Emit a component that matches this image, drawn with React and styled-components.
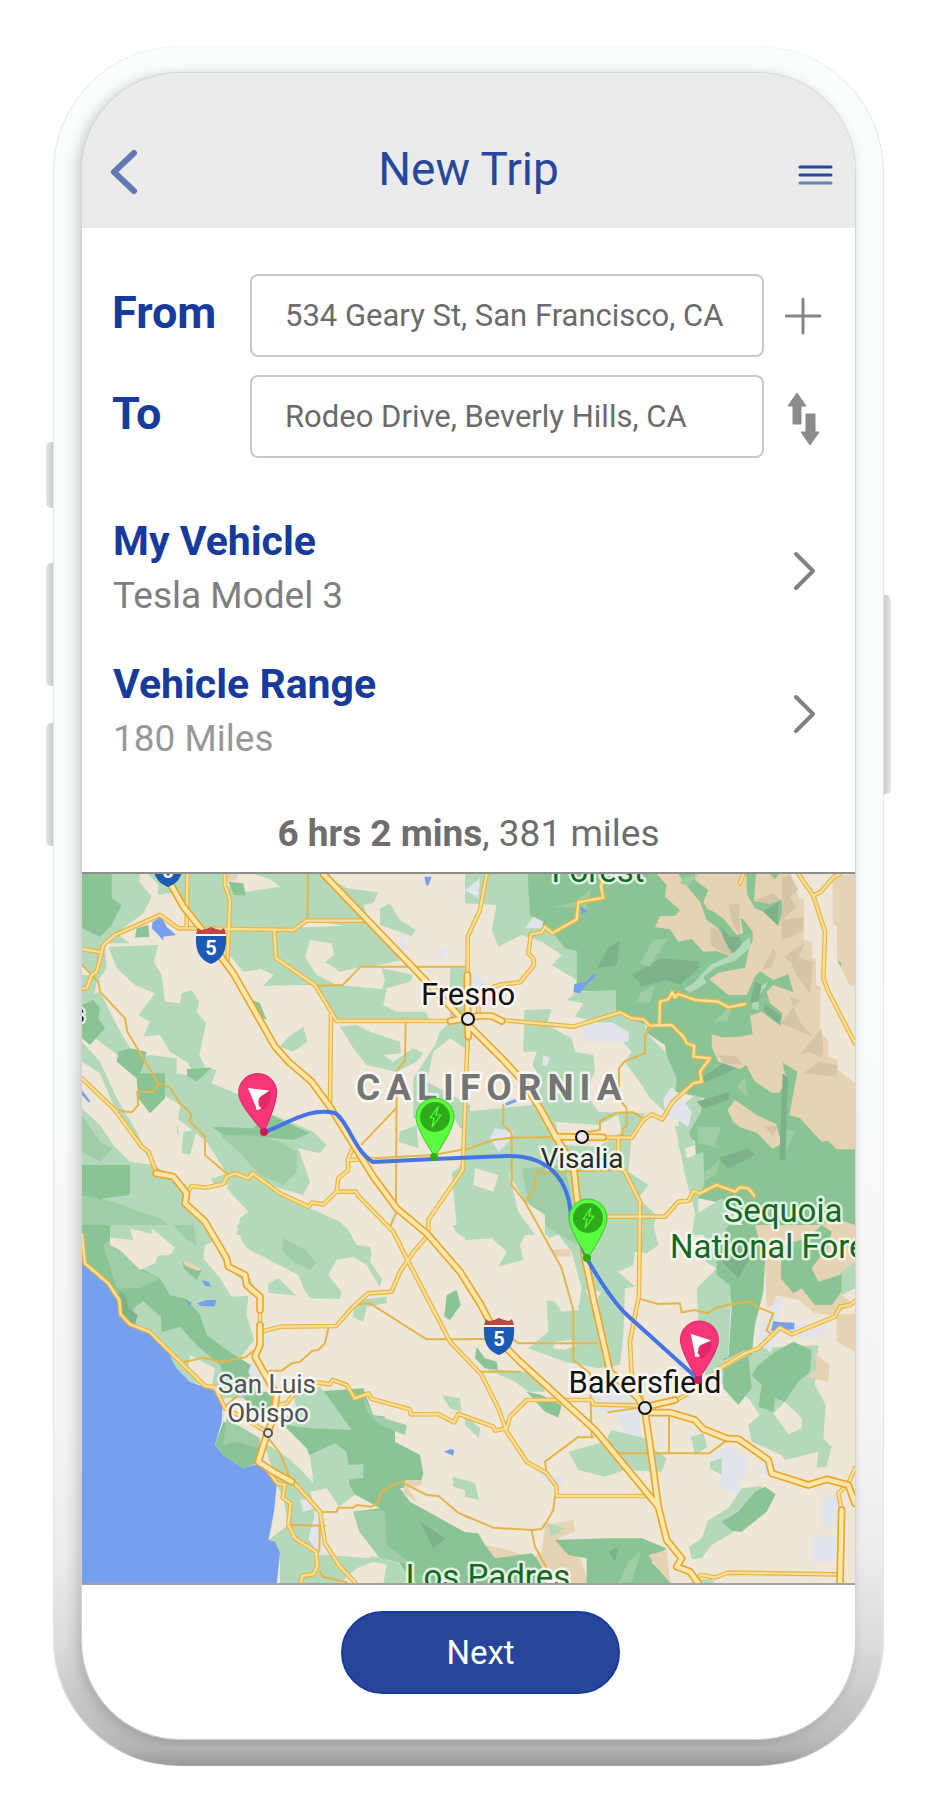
import React, { useState } from "react"
import styled, { createGlobalStyle } from "styled-components"

const GlobalStyle = createGlobalStyle`
  * {
    box-sizing: border-box;
  }

  body {
    margin: 0;
    background: #ffffff;
    font-family: Roboto, "Liberation Sans", sans-serif;
  }

  button, input {
    font-family: inherit;
  }
`

const Page = styled.div`
display: flex;
justify-content: center;
padding: 46px 54px 47px 53px;
`

const Phone = styled.div`
position: relative;
flex: 1;
min-width: 0;
max-width: 831px;
`

const SideButton = styled.span`
position: absolute;
top: ${(props) => props.$top}px;
${(props) => props.$side}: -7px;
width: 8px;
height: ${(props) => props.$height}px;
border-radius: ${(props) => (props.$side === "left" ? "5px 0 0 5px" : "0 5px 5px 0")};
background: linear-gradient(to ${(props) => props.$side}, #c6c6c6, #e6e7e7);
`

const Frame = styled.div`
position: relative;
overflow: hidden;
padding: 27px 29px;
border-radius: 126px;
background: linear-gradient(#fafdfe 0%, #fafdfe 50%, #f4f5f5 80%, #ebecec 88%, #dadbdb 93%, #bcbebd 98%, #b3b5b4 99%, #979998 100%);
box-shadow: inset 1px 0 1px #e4e6e6, inset -1px 0 1px #e4e6e6;
`

const Screen = styled.main`
overflow: hidden;
border-radius: 98px;
background: #ffffff;
box-shadow: 0 0 1px 1px #d3d3d3, 0 0 12px rgba(0, 0, 0, 0.09), -7px 3px 14px rgba(0, 0, 0, 0.13);
`

const Header = styled.header`
display: grid;
grid-template-columns: 1fr auto 1fr;
align-items: center;
height: 155px;
padding: 36px 20px 0;
background: #ebebeb;

    h1 {
        margin: 0;
        color: #27479c;
        font-size: 46px;
        font-weight: 400;
    }
`

const IconButton = styled.button`
display: flex;
justify-self: ${(props) => props.$align || "center"};
padding: 0;
border: 0;
background: none;
cursor: pointer;
`

const TripForm = styled.form`
display: grid;
grid-template-columns: 138px 1fr 79px;
row-gap: 18px;
align-items: center;
padding: 46px 12px 0 30px;
`

const FieldLabel = styled.label`
padding-bottom: 6px;
color: #173b9d;
font-size: 45px;
font-weight: 700;
line-height: 52px;
`

const Field = styled.input`
width: 100%;
min-width: 0;
height: 83px;
padding: 0 33px;
border: 2px solid #c9c9c9;
border-radius: 8px;
background: #ffffff;
color: #6b6b6b;
font-size: 31px;
`

const Options = styled.div`
display: flex;
flex-direction: column;
gap: 33px;
padding: 55px 38px 0 31px;
`

const Option = styled.a`
display: flex;
align-items: center;
justify-content: space-between;
text-decoration: none;

    strong {
        display: block;
        color: #173b9d;
        font-size: 41px;
        line-height: 56px;
    }

    span {
        display: block;
        color: ${(props) => (props.$faded ? "#989898" : "#7e7e7e")};
        font-size: 37px;
        line-height: 54px;
    }
`

const Summary = styled.p`
margin: 0;
padding: 44px 0 14px;
color: #706d6e;
font-size: 37px;
line-height: 48px;
text-align: center;
`

const MapFrame = styled.div`
border-top: 2px solid #8e8e8e;
border-bottom: 2px solid #a3a1a1;

    svg {
        display: block;
        width: 100%;
    }
`

const Footer = styled.footer`
display: flex;
justify-content: center;
height: 154px;
padding: 26px 0 0 24px;
`

const NextButton = styled.button`
width: 279px;
height: 83px;
border: 2px solid #173b9d;
border-radius: 42px;
background: #27459a;
color: #ffffff;
font-size: 33px;
cursor: pointer;
`

const MapLabel = styled.text`
fill: ${(props) => props.$color || "#111111"};
font-size: ${(props) => props.$size}px;
font-weight: ${(props) => props.$weight || 400};
letter-spacing: ${(props) => (props.$wide ? "6px" : "normal")};
stroke: rgba(255, 255, 255, 0.75);
stroke-width: 5px;
stroke-linejoin: round;
paint-order: stroke;
text-anchor: ${(props) => props.$anchor || "middle"};
`

// the terrain is drawn in tiles, each with its own origin
const TILES = { nw: [0, 0], ne: [1155, 0], sierra: [1680, 15], sw: [0, 1080], se: [1155, 1080] }

const COLORS = {
  land: "#eee7d8",
  light: "#b4d9ba",
  mid: "#9fcea6",
  dark: "#8ac495",
  shade: "#7db189",
  sand: "#e5d3b4",
  sandShade: "#d5c4a5",
  urban: "#e1e4ea",
  water: "#779fef",
}

const TERRAIN = [
  ["nw", "light", "6,27 180,27 178,50 215,95 190,145 110,205 150,235 75,235 80,310 55,345 6,300"],
  ["nw", "dark", "6,27 95,27 95,100 125,120 95,180 60,215 6,190"],
  ["nw", "dark", "170,190 205,180 208,215 165,218"],
  ["nw", "light", "205,27 435,27 430,60 500,80 600,65 570,42 520,27 730,27 800,70 895,82 880,115 850,120 870,170 840,190 680,165 640,190 440,195 360,180 290,80 235,90 235,60"],
  ["nw", "dark", "445,50 490,55 497,92 462,90"],
  ["nw", "sand", "440,27 475,27 470,45 445,50"],
  ["nw", "light", "450,195 860,180 900,210 965,285 900,300 850,305 780,320 735,290 762,270 755,235 690,225 675,275 710,330 770,360 905,372 915,345 905,310 1000,330 990,350 920,370 910,420 950,440 1035,440 1050,465 770,465 700,360 640,360 550,363 580,330 545,313 490,320 440,260"],
  ["nw", "light", "900,130 930,115 960,165 1008,195 995,213 900,180"],
  ["nw", "urban", "965,205 990,290 950,245"],
  ["nw", "urban", "1110,235 1085,300 1072,265"],
  ["nw", "urban", "1135,95 1170,65 1170,105"],
  ["nw", "urban", "1065,492 1100,495 1085,522"],
  ["nw", "light", "1110,310 1170,310 1170,560 1110,520 1060,560 1040,650 1170,720 1170,780 1140,790 1110,740 1000,760 1000,640 1065,540 1080,500 1110,470"],
  ["nw", "light", "85,245 235,240 222,290 245,330 255,410 300,415 305,385 335,375 358,410 350,440 378,475 358,570 375,605 410,615 395,655 480,690 560,740 700,800 740,840 720,865 655,850 690,950 670,990 600,970 500,930 440,960 400,960 380,890 320,860 290,800 300,720 250,690 200,700 150,600 100,560 20,500 6,480 6,400 60,380 110,480 150,550 190,575 210,570 290,580 290,625 345,635 325,595 270,560 240,510 190,515 210,470 175,450 225,385 165,360 110,310"],
  ["nw", "light", "6,330 55,330 40,400 6,400"],
  ["nw", "dark", "6,420 40,405 60,430 55,460 75,490 30,540 6,520"],
  ["nw", "light", "6,530 60,590 110,700 170,800 220,900 320,960 310,1020 410,1110 6,1110"],
  ["nw", "land", "6,590 60,625 100,720 180,840 220,900 150,890 100,840 60,780 6,730"],
  ["nw", "dark", "115,560 150,550 200,560 190,600 180,625 255,625 255,700 210,745 175,700 170,640 110,590"],
  ["nw", "mid", "6,750 60,830 100,850 60,890 6,860"],
  ["nw", "dark", "6,900 150,900 150,990 70,1000 6,1060"],
  ["nw", "mid", "6,990 100,1010 180,1040 240,1060 300,1110 6,1110"],
  ["nw", "dark", "320,612 395,608 350,650 322,632"],
  ["nw", "dark", "505,400 540,415 560,465 530,450"],
  ["nw", "light", "625,515 670,485 682,530 640,560 600,545"],
  ["nw", "light", "780,485 830,480 870,500 960,530 962,565 910,570 940,590 1000,550 1030,565 1010,590 950,620 860,600 820,550"],
  ["nw", "dark", "395,785 520,790 560,745 690,805 640,825 530,815 430,810"],
  ["nw", "mid", "420,810 530,812 600,830 650,860 650,920 610,960 540,930 475,860"],
  ["nw", "land", "290,760 330,790 380,830 440,925 370,950 310,900"],
  ["nw", "light", "310,800 350,795 330,870 305,865"],
  ["nw", "light", "450,950 520,925 600,985 690,1030 780,1070 815,1110 470,1110 480,1060 505,1040 440,970"],
  ["nw", "light", "960,800 1010,780 1015,850 955,830"],
  ["nw", "light", "1115,925 1170,880 1170,1110 1130,1080"],
  ["nw", "urban", "925,1040 970,1020 935,1090"],
  ["nw", "water", "218,170 245,155 260,185 288,210 250,215 250,228 235,210 215,190"],
  ["nw", "water", "1033,35 1055,35 1045,62 1038,60"],
  ["nw", "water", "6,675 32,710 25,712 6,690"],

  ["ne", "light", "0,27 190,27 200,150 250,185 270,210 300,245 335,258 335,345 260,300 290,270 230,230 170,210 100,245 80,195 95,120 0,115"],
  ["ne", "dark", "188,27 1000,27 1040,240 1060,500 1110,600 1170,650 1170,1110 850,1110 800,1020 700,1000 690,830 640,790 720,700 630,680 610,610 600,540 540,500 550,480 452,460 452,378 335,378 335,258 300,250 265,205 195,150"],
  ["ne", "light", "335,380 452,375 452,435 540,480 550,510 600,560 635,640 630,720 600,740 555,700 530,660 480,590 500,560 430,480 330,455 355,415 305,405"],
  ["ne", "light", "178,435 260,432 245,480 320,520 330,560 385,570 390,620 360,680 400,740 540,745 500,810 490,920 550,960 520,1000 575,1050 560,1110 0,1110 0,740 200,720 215,620 175,560"],
  ["ne", "mid", "170,910 300,900 320,1000 330,1110 230,1080 190,1010"],
  ["ne", "land", "30,910 100,930 85,980 25,960"],
  ["ne", "land", "130,920 180,1010 240,1050 240,1110 210,1110 160,1040"],
  ["ne", "land", "270,770 400,780 460,750 470,800 400,845 290,840"],
  ["ne", "land", "150,560 215,560 190,640 130,700 80,640 90,560"],
  ["ne", "urban", "20,320 60,350 80,420 20,430"],
  ["ne", "urban", "205,155 235,170 230,190 180,190"],
  ["ne", "urban", "355,475 440,472 492,500 490,530 355,530"],
  ["ne", "urban", "90,790 150,800 130,830 100,860 75,820"],
  ["ne", "urban", "0,75 45,40 40,100"],
  ["ne", "light", "640,730 690,690 712,700 708,740 680,790 660,830 640,850"],
  ["ne", "light", "630,780 670,800 690,840 660,850 665,880 715,860 718,960 700,1000 700,1080 660,930 650,880"],
  ["ne", "urban", "620,665 650,700 680,740 670,785 600,745 595,700"],
  ["ne", "shade", "500,330 590,280 705,290 640,350 600,340 530,355"],
  ["ne", "shade", "430,250 465,225 455,300 395,310"],
  ["ne", "shade", "760,880 850,850 870,870 790,910"],
  ["ne", "mid", "330,110 380,70 365,130 270,125"],
  ["ne", "mid", "560,250 605,220 580,270 540,265"],
  ["ne", "mid", "530,390 570,360 555,410 510,415"],
  ["ne", "water", "328,357 365,350 372,340 392,322 388,340 370,352 345,385 325,382"],
  ["ne", "water", "345,122 370,140 350,146"],
  ["ne", "water", "120,715 150,702 155,710 125,722"],
  ["ne", "urban", "235,570 255,580 245,605 232,600"],
  ["ne", "light", "690,1050 770,1000 800,1020 820,1110 680,1110"],
  ["ne", "sand", "870,1080 930,1110 870,1110"],
  ["ne", "sand", "1050,1090 1110,1060 1170,1080 1170,1110 1050,1110"],

  ["sierra", "sand", "50,12 80,45 75,80 120,120 105,138 60,138 45,172 90,178 115,215 155,207 190,245 230,243 280,262 335,200 315,293 235,308 208,328 265,375 320,375 345,320 360,303 400,330 445,312 460,367 400,345 380,365 390,400 427,430 422,468 365,425 330,437 338,492 300,500 245,502 215,492 215,530 235,575 300,598 318,585 345,635 395,668 417,668 440,635 428,578 472,605 448,735 480,745 545,815 565,812 590,838 645,838 645,12"],
  ["sierra", "dark", "115,12 165,12 165,25 205,60 190,100 215,120 255,150 290,195 310,190 300,135 338,185 338,215 320,240 280,262 250,225 235,175 200,150 180,95 150,60"],
  ["sierra", "sand", "165,12 165,30 205,60 192,92 200,115 240,135 260,155 292,193 310,190 298,145 320,150 335,100 318,70 310,12"],
  ["sierra", "dark", "318,12 348,12 342,92 390,102 425,88 428,125 415,168 380,130 345,115 322,75"],
  ["sierra", "dark", "390,12 418,12 405,28"],
  ["sierra", "dark", "628,142 645,140 645,162 632,160"],
  ["sierra", "sand", "262,720 285,690 350,735 408,762 425,822 397,836 350,788 300,772 280,755"],
  ["sierra", "light", "132,356 160,340 210,285 260,262 330,200 332,232 285,272 230,290 190,322 200,338 150,368"],
  ["sierra", "light", "335,415 345,360 385,335 375,355 358,372 355,420"],
  ["sierra", "mid", "0,280 40,210 85,205 45,260 30,290"],
  ["sierra", "mid", "0,370 45,345 30,395 0,400"],
  ["sierra", "mid", "220,455 280,405 260,455"],
  ["sierra", "mid", "130,25 175,12 145,48 120,40"],
  ["sierra", "mid", "290,650 315,620 322,680"],
  ["sierra", "mid", "170,770 245,770 225,825 245,835 175,820"],
  ["sierra", "mid", "440,780 465,785 438,840"],
  ["sierra", "mid", "195,905 240,870 230,910 190,935"],
  ["sierra", "shade", "0,325 80,265 180,290 120,345 80,330 0,350"],
  ["sierra", "shade", "175,630 250,580 290,595 200,635"],
  ["sierra", "shade", "170,695 270,665 265,690 190,715"],
  ["sierra", "shade", "428,610 445,625 440,720 436,872 418,868"],
  ["sierra", "shade", "240,165 270,200 300,200 305,225 280,250 255,220"],
  ["sierra", "shade", "345,335 365,345 355,395 330,400"],
  ["sierra", "shade", "372,400 425,440 415,460 375,425"],
  ["sierra", "shade", "370,125 415,95 412,165"],
  ["sierra", "land", "450,12 645,12 645,640 595,600 590,570 565,560 565,510 540,490 542,350 528,345 528,268 517,265 515,213 492,210 492,90 477,85"],
  ["sierra", "sand", "578,20 645,12 645,350 628,345 592,270 590,170 578,160"],
  ["sierra", "dark", "592,272 603,278 603,292"],
  ["sierra", "sandShade", "425,25 450,12 475,60 450,80 470,110 425,150 428,90"],
  ["sierra", "sandShade", "425,150 490,140 490,180 455,200 425,210"],
  ["sierra", "sandShade", "430,260 492,220 475,265 520,275 510,370 465,310 455,280"],
  ["sierra", "sandShade", "365,300 400,235 410,250 395,290"],
  ["sierra", "sandShade", "480,555 545,475 550,535 545,565 510,545"],
  ["sierra", "sandShade", "490,610 535,575 592,585 590,620"],
  ["sierra", "sandShade", "420,460 480,390 450,380 475,450 520,500"],
  ["sierra", "sandShade", "210,170 240,180 278,262 215,230"],
  ["sierra", "sandShade", "265,105 298,100 300,190 280,170"],
  ["sierra", "sandShade", "235,555 290,560 310,585 250,580"],
  ["sierra", "sandShade", "370,765 412,770 400,800"],
  ["sierra", "sandShade", "345,90 400,70 420,88 390,102"],

  ["sw", "light", "6,0 380,0 440,120 510,160 530,200 505,212 500,270 522,345 480,400 530,440 560,530 540,640 430,590 425,520 300,440 6,130"],
  ["sw", "dark", "6,0 90,0 90,50 125,75 180,130 240,160 270,210 320,222 360,270 380,330 440,375 520,425 520,470 500,490 440,470 420,420 350,360 300,305 245,322 243,275 190,228 160,250 165,300 60,160 6,110"],
  ["sw", "mid", "90,45 180,135 240,160 180,190 110,190 70,60"],
  ["sw", "mid", "280,0 340,0 350,60 320,45"],
  ["sw", "dark", "310,110 365,135 350,165 310,130"],
  ["sw", "sand", "310,105 365,130 355,138 315,122"],
  ["sw", "land", "90,38 160,45 150,10 215,28 215,10 285,68 270,90 235,92 225,115 180,135 120,75 90,60"],
  ["sw", "land", "375,60 400,50 440,130 510,180 510,212 455,215 420,160 370,100"],
  ["sw", "land", "330,390 405,430 395,485 370,480 325,425"],
  ["sw", "land", "430,520 500,520 560,560 560,630 520,650 460,610 430,590"],
  ["sw", "dark", "480,500 560,500 585,520 570,570 510,545"],
  ["sw", "dark", "600,590 640,560 700,500 850,490 880,570 915,575 910,600 945,610 945,650 1020,690 1030,745 1020,780 960,790 990,830 1170,930 1170,1075 1000,1075 920,960 840,925 820,860 900,850 810,800 805,765 700,720 680,670"],
  ["sw", "light", "640,500 720,485 740,510 815,615 700,610 610,600 650,560"],
  ["sw", "mid", "850,510 880,570 980,600 975,630 900,600 860,560"],
  ["sw", "mid", "820,860 915,855 920,960 1000,1020 900,1000 840,925"],
  ["sw", "light", "690,690 765,655 800,680 805,720 850,718 850,758 800,765 825,810 770,850 700,780"],
  ["sw", "light", "550,650 640,710 770,850 700,860 730,960 860,990 950,1010 1010,1075 600,1075 600,985 560,940 590,860 590,770"],
  ["sw", "land", "570,640 640,640 690,710 700,760 640,715"],
  ["sw", "land", "590,780 610,820 625,900 565,945 585,870"],
  ["sw", "land", "690,800 740,790 780,850 830,910 880,975 870,1000 750,990 715,870"],
  ["sw", "land", "830,1030 880,1010 920,1020 910,1075 780,1075"],
  ["sw", "urban", "660,825 690,820 705,850 670,860"],
  ["sw", "urban", "705,870 735,880 730,960 750,990 715,990 685,940"],
  ["sw", "urban", "520,400 560,480 530,500 505,440"],
  ["sw", "urban", "555,320 575,335 570,360 555,355"],
  ["sw", "water", "6,60 20,120 85,180 115,225 120,270 150,300 205,320 270,390 290,430 330,470 370,485 410,500 427,545 425,590 405,660 430,690 490,730 540,715 590,780 582,860 565,945 585,950 600,985 590,1075 6,1075"],
  ["sw", "light", "270,395 310,425 370,480 330,470 290,430"],
  ["sw", "dark", "430,590 470,600 540,650 530,715 490,732 430,690 405,660"],
  ["sw", "mid", "440,580 540,640 535,670 470,650 430,660"],
  ["sw", "shade", "115,195 135,210 145,250 172,270 165,300 125,275"],
  ["sw", "light", "470,0 790,0 805,15 830,60 870,65 875,90 870,110 905,160 900,188 860,120 820,95 770,105 745,150 785,200 780,222 690,220 670,190 655,150 500,70 485,45"],
  ["sw", "mid", "610,40 670,70 710,115 690,135 640,110 605,75"],
  ["sw", "light", "565,175 595,160 650,212 565,203"],
  ["sw", "dark", "1100,210 1130,195 1142,240 1110,285 1093,275"],
  ["sw", "light", "830,225 920,215 920,235 860,245 850,290 818,275"],
  ["sw", "light", "1085,510 1140,520 1145,560 1110,550"],
  ["sw", "light", "1118,0 1170,0 1170,45 1130,25"],
  ["sw", "light", "1118,755 1170,770 1170,800 1120,785"],
  ["sw", "sand", "975,765 1025,765 1025,780 985,790 1015,835 970,805"],
  ["sw", "shade", "1020,890 1095,940 1060,970"],
  ["sw", "water", "365,165 385,170 395,185 375,182"],
  ["sw", "water", "352,235 380,225 410,225 402,245 360,242"],
  ["sw", "water", "315,225 335,232 328,242"],
  ["sw", "water", "1092,680 1112,672 1122,675 1120,692"],

  ["se", "light", "0,0 195,0 165,60 175,105 100,125 125,80 80,40 0,45"],
  ["se", "light", "245,0 565,0 580,60 545,85 510,80 505,120 460,140 510,185 480,190 475,330 465,420 400,430 300,410 190,370 250,320 245,225 270,230 290,260 340,255 350,190 320,80 280,30 250,40"],
  ["se", "mid", "240,0 330,0 340,60 300,40"],
  ["se", "sand", "260,75 315,70 318,95 275,95"],
  ["se", "land", "270,350 320,345 340,355 300,375 265,370"],
  ["se", "urban", "360,195 410,200 385,240"],
  ["se", "light", "695,190 755,130 720,110 730,60 700,0 780,0 800,170 790,390 870,370 1060,360 1050,480 1082,540 1075,640 1100,665 1085,725 1055,728 1060,680 960,705 950,690 860,650 850,600 885,570 850,520 760,470 720,450 700,280"],
  ["se", "dark", "755,70 790,0 900,0 900,110 895,200 870,300 860,390 790,405 800,250 795,180 755,150"],
  ["se", "shade", "770,110 850,40 860,90 820,160"],
  ["se", "sand", "870,0 1170,0 1170,120 1130,150 1130,210 1170,240 1100,270 1050,265 950,230 905,250 900,110"],
  ["se", "land", "930,210 1000,225 1050,265 1045,300 960,300"],
  ["se", "light", "1130,140 1170,110 1170,190 1130,210"],
  ["se", "dark", "950,60 1030,40 1070,0 1100,20 1080,100 1130,150 1130,200 1100,240 1050,240 1010,190 985,205 948,160"],
  ["se", "sand", "1040,130 1070,90 1125,100 1125,150 1060,170"],
  ["se", "dark", "930,380 985,350 1040,375 1035,440 1000,470 960,530 930,520 925,560 880,545 890,480 860,450 880,420"],
  ["se", "dark", "775,400 850,390 860,490 820,540 775,490"],
  ["se", "land", "925,565 960,530 1010,580 1010,610 970,628"],
  ["se", "sand", "1050,385 1095,420 1090,470 1025,455 1055,430"],
  ["se", "sand", "1115,270 1170,265 1170,380 1115,350"],
  ["se", "sand", "770,410 840,375 850,390 780,430"],
  ["se", "urban", "875,295 905,290 930,220 955,225 940,290 1095,305 1050,345 940,325 915,385 890,350"],
  ["se", "urban", "380,500 510,490 530,640 480,625 450,565 385,555"],
  ["se", "urban", "735,690 790,665 850,705 840,755 820,770 835,815 765,790 770,740"],
  ["se", "urban", "890,700 910,700 960,755 885,750"],
  ["se", "urban", "1070,820 1130,800 1130,905 1070,905"],
  ["se", "urban", "1040,940 1115,930 1115,1010 1040,1010"],
  ["se", "urban", "220,740 295,760 290,785 240,770"],
  ["se", "light", "310,680 420,650 440,615 540,640 555,665 605,700 590,740 480,735 420,755 340,735"],
  ["se", "light", "678,635 715,625 727,665 690,692"],
  ["se", "light", "735,710 770,700 770,750 735,730"],
  ["se", "light", "830,790 890,783 900,850 800,925 740,960 710,1000 680,1003 672,965 710,940 730,885 790,850"],
  ["se", "dark", "870,800 900,785 932,808 905,860 830,920 800,918 770,890 820,860"],
  ["se", "dark", "35,365 60,400 95,410 100,440 60,430 30,400"],
  ["se", "light", "60,430 215,445 240,500 190,500 150,470"],
  ["se", "dark", "185,500 230,510 290,540 280,578 240,560"],
  ["se", "light", "0,570 45,610 42,640 0,600"],
  ["se", "light", "0,765 30,775 42,825 0,815"],
  ["se", "sand", "240,900 325,885 330,920 280,940 340,980 370,1075 0,1075 0,940 60,960 130,975 200,1000 230,980"],
  ["se", "light", "245,893 300,910 260,935"],
  ["se", "dark", "270,945 430,940 530,940 605,970 560,1010 620,1075 365,1075 365,1000 310,990"],
  ["se", "dark", "0,922 40,925 60,960 90,1000 200,985 215,1000 240,1045 240,1075 0,1075"],
  ["se", "sand", "550,990 605,975 615,1075 580,1030"],
  ["se", "shade", "430,980 460,965 450,1010"],
  ["se", "mid", "490,1010 530,975 500,1070 460,1075"],
  ["se", "light", "680,1062 740,1062 750,1075 680,1075"],
  ["se", "water", "925,288 945,292 988,293 988,313 918,318"],
]

const ROADS = {
  // interstate and highways
  major: [
    ["nw", "265,45 310,125 370,200 430,285 460,325 585,545 625,590 695,650 750,725 790,790 880,935 950,1030 1040,1105 1140,1220 1200,1315 1260,1430 1320,1490 1545,1695 1735,1925 1760,2025 1805,2080 1790,2105 1830,2120 1855,2155"],
    ["nw", "730,27 1030,340 1140,455 1270,585 1330,650 1380,730 1430,820 1480,900 1490,990 1515,1180 1540,1300 1590,1520 1675,1600 1695,1640 1710,1740 1735,1925"],
    ["nw", "228,925 280,935 320,985 315,1015 375,1070 440,1180 445,1205 495,1230 500,1260 540,1295 540,1335"],
    ["sw", "540,300 540,360 525,395 590,510 580,580 560,630 535,710 580,740 635,770"],
    ["nw", "1163,465 1162,330"],
    ["nw", "1163,465 1165,515"],
    ["nw", "1112,468 1195,453 1235,453 1265,468"],
    ["ne", "270,815 415,817"],
    ["se", "550,563 615,563 690,585 715,612 785,640 820,642 910,705 920,745 1030,780 1085,763 1150,780 1170,835"],
    ["se", "545,545 630,525"],
    ["se", "1130,855 1125,1075"],
  ],
  middle: [
    ["nw", "6,252 65,262 70,240 105,210 240,150 295,190 345,190 440,192 640,195 680,167 860,167"],
    ["nw", "65,262 50,320 35,330 20,370 6,370"],
    ["nw", "435,27 435,60 450,105 442,290"],
    ["nw", "322,27 320,190"],
    ["nw", "583,198 588,280 705,360 770,468 1110,468"],
    ["nw", "753,450 750,715"],
    ["nw", "6,640 105,735 185,845 205,860 230,925"],
    ["nw", "320,985 335,963 375,968 430,957 440,935 465,925 505,940 518,925 600,985 685,1025 695,1013 730,1018 770,980 828,980 835,993 940,1100 985,1190 1110,1430 1205,1530 1255,1630 1280,1700 1340,1790 1400,1825 1430,1865 1430,1893 1725,1893"],
    ["nw", "835,850 815,855 803,885 805,915 775,940 770,980"],
    ["nw", "1163,515 1148,915 1045,1065 1045,1110 1005,1155 960,1220 935,1280 865,1285 820,1325 768,1383 600,1385 545,1400"],
    ["nw", "805,885 880,882"],
    ["ne", "65,27 45,135 8,215 8,330"],
    ["ne", "40,440 40,380 110,358 165,352 207,300 205,280 190,265 198,208 230,202 240,185 262,205 335,163 340,112 415,98 408,65 418,27"],
    ["ne", "110,465 325,485 465,442 500,460 535,463 555,482 620,480 655,515 665,535 688,543 685,575 735,580 705,620 710,650 685,655 622,712 592,763 560,748 535,765 500,818 400,818"],
    ["ne", "583,480 585,410 610,403 622,382 630,397 640,387 690,405 760,410 790,427 840,417"],
    ["ne", "460,820 460,910 480,920 525,1010 522,1290 495,1430 500,1530 530,1600"],
    ["ne", "425,1055 600,1055 640,1010 670,1008 685,978 705,985 755,960 810,980 825,967 850,970 868,992"],
    ["ne", "1000,27 1045,92 1080,200 1075,340 1090,380 1170,535"],
    ["ne", "1045,92 1068,80 1105,37 1125,27"],
    ["ne", "835,27 825,55"],
    ["sw", "6,30 15,115 85,175 118,225 122,268 150,298 208,320 375,483 405,487 435,550 475,570 560,620"],
    ["sw", "540,255 540,300"],
    ["sw", "710,472 750,478 758,465 800,480 825,520 865,505 875,522 990,553 992,568 1075,567 1122,592 1135,567 1240,605 1245,617 1280,610 1290,575 1340,525 1535,525 1540,538 1680,542"],
    ["sw", "570,745 592,775 615,780 608,818 632,835 625,900 645,940 708,980 712,1025 700,1048 668,1052 662,1075"],
    ["sw", "640,770 720,860 735,955 780,1025 825,1072"],
    ["sw", "590,540 620,535 650,495"],
    ["se", "640,522 690,495 765,430 840,385 880,370 945,308 980,328 1110,275 1125,245 1155,240 1170,228"],
    ["se", "1170,730 1150,775 1120,805 1130,855"],
    ["se", "690,1060 710,1050 750,1058 790,1043 1115,1048"],
    ["se", "445,460 470,480 520,520"],
  ],
  minor: [
    ["nw", "6,300 55,350 60,380 135,460 142,500 235,655 270,668 300,715 335,748 328,768 375,815 375,870 445,930"],
    ["nw", "235,655 220,680 172,680 175,720 155,742 105,735"],
    ["nw", "685,27 682,160"],
    ["nw", "705,362 788,360 842,305 1160,305"],
    ["nw", "977,475 975,585 950,620 948,1020"],
    ["nw", "948,730 845,838"],
    ["nw", "880,880 1060,870 1170,850 1240,825 1295,818 1430,816"],
    ["nw", "928,1090 950,1040"],
    ["ne", "555,490 540,510 540,565 480,588 462,610 462,700 485,730 485,785 472,790 472,815"],
    ["ne", "370,800 405,795 405,768 455,743 505,742 535,760"],
    ["ne", "115,720 115,780 140,805 140,960 180,1010 290,1210 325,1335 325,1485 375,1525 380,1715"],
    ["ne", "180,1010 212,968 212,922 460,915"],
    ["se", "0,342 145,343 160,355 395,355"],
    ["se", "50,440 165,440"],
    ["se", "385,637 338,637 240,710 245,745"],
    ["se", "460,685 733,685 780,650"],
    ["se", "612,565 612,685"],
    ["se", "430,562 540,545"],
    ["se", "525,222 580,237 645,235 650,262 690,255 725,265 755,248 785,240 855,230 875,245 925,265 905,315 915,325"],
    ["se", "270,815 265,855 245,890 230,912 200,915 85,908 0,872"],
    ["se", "200,915 210,965 245,1030"],
    ["sw", "830,238 870,235 1040,343 1170,343"],
    ["sw", "310,412 370,398 430,412 495,397 525,375"],
    ["sw", "745,310 735,355 715,375 697,377 660,410 635,415 605,437 568,437"],
    ["sw", "720,862 770,860 775,848 820,848 830,840 875,845 890,838 905,800 962,770 1040,810 1075,813 1135,863 1170,880"],
    ["sw", "570,645 600,685 632,765"],
    ["sw", "628,900 735,902"],
    ["sw", "720,865 718,980"],
    ["sw", "720,1040 728,1055 800,1072"],
    ["sw", "440,540 475,510"],
  ],
}

const tileShift = (tile) => `translate(${TILES[tile][0]} ${TILES[tile][1]})`

const RoadLayer = ({ roads, color, width }) => (
  <g fill="none" stroke={color} strokeWidth={width} strokeLinejoin="round" strokeLinecap="round">
    {roads.map(([tile, points]) => (
      <polyline key={tile + points} transform={tileShift(tile)} points={points} />
    ))}
  </g>
)

const Shield = ({ x, y }) => (
  <g transform={`translate(${x} ${y})`}>
    <path d="M-15 9 L15 9 C16 24 11 33 0 37 C-11 33 -16 24 -15 9 Z" fill="#1b5bb5" />
    <path d="M-15 7 L-13 1 L-10 3 L-5 2 L0 0 L5 2 L10 3 L13 1 L15 7 Z" fill="#c14640" />
    <path d="M-15 8 L15 8" stroke="#ffffff" strokeWidth="2" />
    <text x="0" y="28" fill="#ffffff" fontSize="20" fontWeight="700" textAnchor="middle">5</text>
  </g>
)

const PIN = "M0 0 C-3 -5 -19 -28 -19 -40 A19 19 0 0 1 19 -40 C19 -28 3 -5 0 0 Z"

const FlagPin = ({ x, y, lean }) => (
  <g transform={`translate(${x} ${y})`}>
    <g transform={`rotate(${lean})`}>
      <path d={PIN} fill="#fa3478" stroke="#d92c68" strokeWidth="1" />
      <path d="M1 -34 L12 -40 L12 -31 L6 -23 L-1 -22 Z" fill="#d9235f" opacity="0.7" />
      <path d="M-9 -46 L12 -40 L3 -36 C-1 -34 -1 -31 -1 -26 L1 -25 L0 -23 L-4 -23 L-4 -26 Z" fill="#ffffff" />
    </g>
    <circle cx="0" cy="0" r="4" fill="#c91c57" />
  </g>
)

const ChargePin = ({ x, y }) => (
  <g transform={`translate(${x} ${y})`}>
    <g transform="translate(1 0)">
      <path d={PIN} fill="#5cfd40" stroke="#38c722" strokeWidth="1" />
      <circle cx="0" cy="-40" r="15" fill="#2eab18" />
      <path
        d="M3 -50 L-5 -39 L-1 -39 L-3 -30 L6 -42 L1 -42 Z"
        fill="none"
        stroke="#5cfd40"
        strokeWidth="1.2"
        strokeLinejoin="round"
      />
    </g>
    <circle cx="0" cy="0" r="4" fill="#2eab18" />
  </g>
)

const City = ({ x, y, small }) => (
  <circle
    cx={x}
    cy={y}
    r={small ? 4 : 6}
    fill="#e8e8e8"
    stroke={small ? "#555555" : "#111111"}
    strokeWidth="2"
  />
)

const TripMap = () => (
  <svg viewBox="0 0 773 709" role="img" aria-label="Trip route">
    <rect width="773" height="709" fill={COLORS.land} />
    <g transform="scale(0.33333) translate(-6 -27)">
      {TERRAIN.map(([tile, kind, points]) => (
        <polygon key={tile + points} transform={tileShift(tile)} points={points} fill={COLORS[kind]} />
      ))}
      <RoadLayer roads={ROADS.minor} color="#e4b548" width="6" />
      <RoadLayer roads={ROADS.middle} color="#ebb440" width="14" />
      <RoadLayer roads={ROADS.middle} color="#fbdf97" width="7" />
      <RoadLayer roads={ROADS.major} color="#eba828" width="23" />
      <RoadLayer roads={ROADS.major} color="#fde6ae" width="13" />
    </g>
    <Shield x={86} y={-24} />
    <Shield x={129} y={53} />
    <Shield x={417} y={444} />
    <City x={386} y={145} />
    <City x={500} y={263} />
    <City x={563} y={534} />
    <City x={186} y={559} small />
    <MapLabel x="516" y="8" $size={33} $color="#14691f">Forest</MapLabel>
    <MapLabel x="3" y="149" $size={28} $anchor="end">s</MapLabel>
    <MapLabel x="386" y="131" $size={31}>Fresno</MapLabel>
    <MapLabel x="274" y="226" $size={37} $weight={700} $color="#757575" $anchor="start" $wide>CALIFORNIA</MapLabel>
    <MapLabel x="500" y="294" $size={28} $color="#2b2b2b">Visalia</MapLabel>
    <MapLabel x="701" y="348" $size={33} $color="#14691f">Sequoia</MapLabel>
    <MapLabel x="588" y="384" $size={33} $color="#14691f" $anchor="start">National Forest</MapLabel>
    <MapLabel x="185" y="519" $size={26} $color="#4d5156">San Luis</MapLabel>
    <MapLabel x="186" y="548" $size={26} $color="#4d5156">Obispo</MapLabel>
    <MapLabel x="563" y="519" $size={31}>Bakersfield</MapLabel>
    <MapLabel x="406" y="714" $size={33} $color="#14691f">Los Padres</MapLabel>
    <path
      d="M182 258 C205 251 225 233 253 239 C267 248 272 277 291 288 L352 285 L425 282 C474 281 488 314 489 345 L505 385 C515 402 530 427 545 441 L616 505"
      fill="none"
      stroke="#4674e6"
      strokeWidth="4"
      strokeLinejoin="round"
    />
    <FlagPin x={182} y={258} lean={-9} />
    <ChargePin x={352} y={283} />
    <ChargePin x={505} y={384} />
    <FlagPin x={616} y={506} lean={2} />
  </svg>
)

const ChevronRight = () => (
  <svg width="26" height="48" viewBox="0 0 26 48" fill="none" stroke="#818181" strokeWidth="4" strokeLinecap="round" strokeLinejoin="round">
    <path d="M5 10 L22 27 L5 44" />
  </svg>
)

const App = () => {
  const [from, setFrom] = useState("534 Geary St, San Francisco, CA")
  const [to, setTo] = useState("Rodeo Drive, Beverly Hills, CA")

  const handleSwap = () => {
    setFrom(to)
    setTo(from)
  }

  return (
    <Page>
      <GlobalStyle />
      <Phone>
        <SideButton $side="left" $top={396} $height={66} />
        <SideButton $side="left" $top={517} $height={123} />
        <SideButton $side="left" $top={677} $height={123} />
        <SideButton $side="right" $top={549} $height={199} />
        <Frame>
          <Screen>
            <Header>
              <IconButton type="button" aria-label="Back" $align="start">
                <svg width="36" height="52" viewBox="0 0 36 52" fill="none" stroke="#6279b6" strokeWidth="6" strokeLinecap="round" strokeLinejoin="round">
                  <path d="M32 10 L12 29 L32 48" />
                </svg>
              </IconButton>
              <h1>New Trip</h1>
              <IconButton type="button" aria-label="Menu" $align="end">
                <svg width="38" height="34" viewBox="0 0 38 34" fill="none" strokeWidth="3" strokeLinecap="round">
                  <path d="M3 15 H34 M3 23 H34" stroke="#27479c" />
                  <path d="M3 31 H34" stroke="#6a80bb" />
                </svg>
              </IconButton>
            </Header>
            <TripForm onSubmit={(event) => event.preventDefault()}>
              <FieldLabel htmlFor="from">From</FieldLabel>
              <Field id="from" type="text" value={from} onChange={(event) => setFrom(event.target.value)} />
              <IconButton type="button" aria-label="Add stop">
                <svg width="38" height="38" viewBox="0 0 38 38" fill="none" stroke="#868686" strokeWidth="3" strokeLinecap="round">
                  <path d="M18 2 V36 M1 19 H35" />
                </svg>
              </IconButton>
              <FieldLabel htmlFor="to">To</FieldLabel>
              <Field id="to" type="text" value={to} onChange={(event) => setTo(event.target.value)} />
              <IconButton type="button" aria-label="Swap" onClick={handleSwap}>
                <svg width="34" height="58" viewBox="0 0 34 58" fill="#8b8b8b" stroke="#8b8b8b" strokeLinejoin="round">
                  <path d="M10 5 L19 18 H14 V36 H6 V18 H1 Z" />
                  <path d="M23 57 L32 44 H28 V26 H19 V44 H14 Z" />
                </svg>
              </IconButton>
            </TripForm>
            <Options>
              <Option href="#vehicle">
                <div>
                  <strong>My Vehicle</strong>
                  <span>Tesla Model 3</span>
                </div>
                <ChevronRight />
              </Option>
              <Option href="#range" $faded>
                <div>
                  <strong>Vehicle Range</strong>
                  <span>180 Miles</span>
                </div>
                <ChevronRight />
              </Option>
            </Options>
            <Summary>
              <b>6 hrs 2 mins</b>, 381 miles
            </Summary>
            <MapFrame>
              <TripMap />
            </MapFrame>
            <Footer>
              <NextButton type="button">Next</NextButton>
            </Footer>
          </Screen>
        </Frame>
      </Phone>
    </Page>
  )
}

export default App
